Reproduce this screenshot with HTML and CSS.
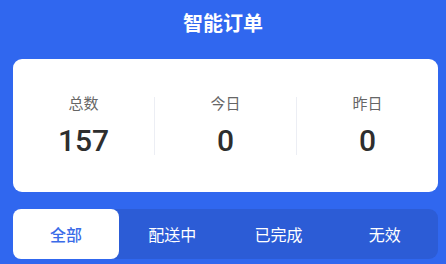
FILE: index.html
```html
<!DOCTYPE html>
<html lang="zh-CN">
<head>
<meta charset="utf-8">
<title>智能订单</title>
<link rel="stylesheet" href="styles.css">
</head>
<body>
<div class="page">
  <header class="title">智能订单</header>
  <section class="card">
    <div class="stat">
      <div class="label">总数</div>
      <div class="value">157</div>
    </div>
    <div class="divider"></div>
    <div class="stat">
      <div class="label">今日</div>
      <div class="value">0</div>
    </div>
    <div class="divider"></div>
    <div class="stat">
      <div class="label">昨日</div>
      <div class="value">0</div>
    </div>
  </section>
  <nav class="tabs">
    <div class="tab active">全部</div>
    <div class="tab">配送中</div>
    <div class="tab">已完成</div>
    <div class="tab">无效</div>
  </nav>
</div>
</body>
</html>
```
FILE: styles.css
```css
html, body {
  margin: 0;
  padding: 0;
  background: #3067ef;
}
body {
  width: 446px;
  height: 264px;
  overflow: hidden;
  font-family: "Liberation Sans", "Noto Sans CJK SC", sans-serif;
}
.page {
  padding: 0 8px 0 13px;
  display: flex;
  flex-direction: column;
}
.title {
  height: 46px;
  line-height: 46px;
  text-align: center;
  color: #fff;
  font-size: 20px;
  font-weight: 700;
  font-family: "Noto Sans CJK SC", sans-serif;
  margin-right: 5px;
}
.card {
  margin-top: 13px;
  height: 133px;
  background: #fff;
  border-radius: 9px;
  display: flex;
  align-items: center;
}
.stat {
  flex: 1;
  display: flex;
  flex-direction: column;
  align-items: center;
  gap: 10px;
}
.divider {
  width: 1px;
  height: 58px;
  background: #eceef4;
}
.label {
  font-family: "Noto Sans CJK SC", sans-serif;
  font-size: 15px;
  line-height: 20px;
  color: #666;
}
.value {
  font-family: Roboto, "Liberation Sans", sans-serif;
  font-size: 30px;
  line-height: 36px;
  color: #2e2e2e;
  font-weight: 500;
}
.tabs {
  margin-top: 17px;
  height: 50px;
  background: #2c5cd6;
  border-radius: 9px;
  display: flex;
}
.tab {
  flex: 1;
  display: flex;
  align-items: center;
  justify-content: center;
  color: #fff;
  font-family: "Noto Sans CJK SC", sans-serif;
  font-size: 16px;
  border-radius: 8px;
}
.tab.active {
  background: #fff;
  color: #3a6be8;
  font-weight: 500;
}
```
